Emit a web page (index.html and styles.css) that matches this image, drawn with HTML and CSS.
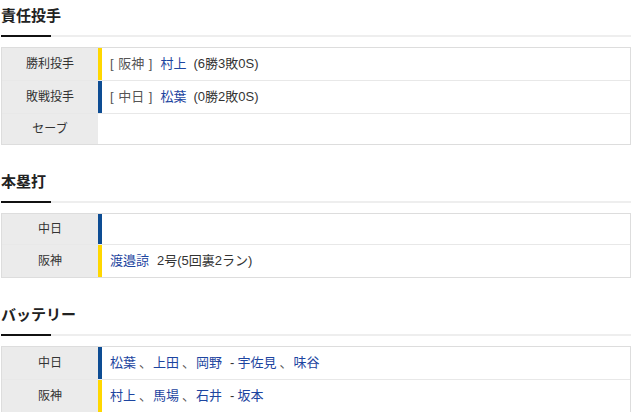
FILE: index.html
```html
<!DOCTYPE html>
<html lang="ja">
<head>
  <meta charset="UTF-8">
  <meta name="viewport" content="width=device-width, initial-scale=1.0">
  <title>試合情報</title>
  <link rel="stylesheet" href="styles.css">
</head>
<body>
  <div class="page">
    <section class="block">
      <h2 class="block-title">責任投手</h2>
      <table class="info-table">
        <tr>
          <th>勝利投手</th>
          <td class="team-t"><span class="team">[ 阪神 ]</span><a class="player">村上</a><span class="rec">(6勝3敗0S)</span></td>
        </tr>
        <tr>
          <th>敗戦投手</th>
          <td class="team-d"><span class="team">[ 中日 ]</span><a class="player">松葉</a><span class="rec">(0勝2敗0S)</span></td>
        </tr>
        <tr>
          <th>セーブ</th>
          <td></td>
        </tr>
      </table>
    </section>

    <section class="block">
      <h2 class="block-title">本塁打</h2>
      <table class="info-table">
        <tr>
          <th>中日</th>
          <td class="team-d"></td>
        </tr>
        <tr>
          <th>阪神</th>
          <td class="team-t"><a class="player">渡邉諒</a><span class="hr">2号(5回裏2ラン)</span></td>
        </tr>
      </table>
    </section>

    <section class="block">
      <h2 class="block-title">バッテリー</h2>
      <table class="info-table">
        <tr>
          <th>中日</th>
          <td class="team-d"><a class="player">松葉</a><span class="sep">、</span><a class="player">上田</a><span class="sep">、</span><a class="player">岡野</a><span class="dash">-</span><a class="player">宇佐見</a><span class="sep">、</span><a class="player">味谷</a></td>
        </tr>
        <tr>
          <th>阪神</th>
          <td class="team-t"><a class="player">村上</a><span class="sep">、</span><a class="player">馬場</a><span class="sep">、</span><a class="player">石井</a><span class="dash">-</span><a class="player">坂本</a></td>
        </tr>
      </table>
    </section>
  </div>
</body>
</html>
```

FILE: styles.css
```css
body {
  margin: 0;
  padding: 0;
  background: #fff;
  color: #333;
  font-family: "Liberation Sans", "Noto Sans CJK JP", sans-serif;
}

.page {
  width: 630px;
  padding: 0 1px;
}

.block {
  margin-bottom: 21px;
}

.block-title {
  position: relative;
  margin: 0;
  padding: 4px 0 7px;
  font-size: 15px;
  line-height: 24px;
  font-weight: bold;
  color: #222;
  border-bottom: 2px solid #eee;
}

/* 見出しの下線（黒い部分） */
.block-title::after {
  content: "";
  position: absolute;
  left: 0;
  bottom: -2px;
  width: 50px;
  height: 2px;
  background: #111;
}

.info-table {
  width: 100%;
  margin-top: 10px;
  border: 1px solid #ddd;
  border-spacing: 0;
}

.info-table tr + tr th,
.info-table tr + tr td {
  border-top: 1px solid #e8e8e8;
}

.info-table th {
  width: 96px;
  padding: 7px 0;
  background: #ebebeb;
  font-size: 12px;
  line-height: 16px;
  font-weight: normal;
  color: #333;
  text-align: center;
}

.info-table td {
  padding: 7px 8px 7px 12px;
  font-size: 13px;
  line-height: 18px;
  color: #333;
}

.team-t {
  box-shadow: inset 4px 0 0 #ffd700;
}

.team-d {
  box-shadow: inset 4px 0 0 #0d4c93;
}

.team {
  color: #555;
  word-spacing: 1px;
}

.player {
  color: #1d45a0;
  text-decoration: none;
}

.team + .player {
  margin-left: 8px;
}

.rec {
  margin-left: 7px;
}

.hr {
  margin-left: 8px;
}

.sep {
  color: #555;
  margin: 0 1px 0 3px;
}

.dash {
  margin: 0 3px 0 8px;
}
```
